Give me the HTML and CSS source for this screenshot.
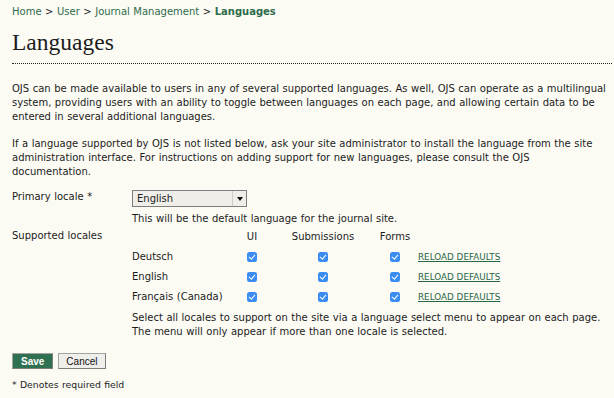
FILE: index.html
```html
<!DOCTYPE html>
<html>

<head>
    <title>Languages</title>
    <link rel="stylesheet" href="styles.css">
</head>

<body>
    <div class="page">
        <div class="breadcrumb">
            <a href="#">Home</a> &gt; <a href="#">User</a> &gt; <a href="#">Journal Management</a> &gt; <a href="#" class="current">Languages</a>
        </div>
        <h1 class="page-title">Languages</h1>

        <p class="intro">OJS can be made available to users in any of several supported languages. As well, OJS can operate as a multilingual system, providing users with an ability to toggle between languages on each page, and allowing certain data to be entered in several additional languages.</p>
        <p class="intro">If a language supported by OJS is not listed below, ask your site administrator to install the language from the site administration interface. For instructions on adding support for new languages, please consult the OJS documentation.</p>

        <form class="locale-form">
            <div class="form-row">
                <label class="form-label">Primary locale *</label>
                <div class="form-value">
                    <div class="select-box">
                        <span class="select-text">English</span>
                        <span class="select-arrow"></span>
                    </div>
                    <div class="instruct first">This will be the default language for the journal site.</div>
                </div>
            </div>
            <div class="form-row">
                <label class="form-label second">Supported locales</label>
                <div class="form-value">
                    <div class="locale-grid">
                        <span></span>
                        <span class="col-head">UI</span>
                        <span class="col-head">Submissions</span>
                        <span class="col-head">Forms</span>
                        <span></span>

                        <span class="locale-name">Deutsch</span>
                        <span class="cell"><span class="check"></span></span>
                        <span class="cell"><span class="check"></span></span>
                        <span class="cell"><span class="check"></span></span>
                        <a href="#" class="reload">RELOAD DEFAULTS</a>

                        <span class="locale-name">English</span>
                        <span class="cell"><span class="check"></span></span>
                        <span class="cell"><span class="check"></span></span>
                        <span class="cell"><span class="check"></span></span>
                        <a href="#" class="reload">RELOAD DEFAULTS</a>

                        <span class="locale-name">Français (Canada)</span>
                        <span class="cell"><span class="check"></span></span>
                        <span class="cell"><span class="check"></span></span>
                        <span class="cell"><span class="check"></span></span>
                        <a href="#" class="reload">RELOAD DEFAULTS</a>
                    </div>
                    <div class="instruct">Select all locales to support on the site via a language select menu to appear on each page. The menu will only appear if more than one locale is selected.</div>
                </div>
            </div>

            <div class="buttons">
                <button type="button" class="button default">Save</button>
                <button type="button" class="button">Cancel</button>
            </div>
        </form>

        <p class="footnote">* Denotes required field</p>
    </div>
</body>

</html>
```

FILE: styles.css
```css
body {
    margin: 0;
    background-color: #fbfbf4;
    color: #1c1c1c;
    font-family: "DejaVu Sans", Verdana, sans-serif;
    font-size: 10px;
    line-height: 14px;
    word-spacing: 0.35px;
}

a {
    color: #2e6b4b;
    text-decoration: none;
}

.page {
    padding: 5px 8px 0 12px;
}

.breadcrumb {
    height: 14px;
}

.breadcrumb .current {
    font-weight: bold;
}

.page-title {
    font-family: "Liberation Serif", Georgia, serif;
    font-weight: normal;
    font-size: 23.5px;
    line-height: 28px;
    margin: 9px 0 0 0;
    padding-bottom: 7px;
    border-bottom: 1px dotted #222;
    margin-right: -6px;
}

.intro {
    margin: 13px 0 0 0;
}

.intro:first-of-type {
    margin-top: 18px;
}

.locale-form {
    margin-top: 11px;
}

.form-row {
    display: grid;
    grid-template-columns: 120px 1fr;
    margin-bottom: 1px;
}

.form-label.second {
    padding-top: 2px;
}

.select-box {
    display: flex;
    box-sizing: border-box;
    width: 115px;
    height: 17px;
    border: 1px solid #7d7d7d;
    background-color: #efeee8;
}

.select-text {
    flex: 1;
    padding-left: 4px;
    line-height: 16px;
    border-right: 1px solid #cfcfca;
}

.select-arrow {
    width: 13px;
    position: relative;
}

.select-arrow::after {
    content: "";
    position: absolute;
    left: 4px;
    top: 6px;
    border-left: 3px solid transparent;
    border-right: 3px solid transparent;
    border-top: 4px solid #111;
}

.instruct {
    margin-top: 4px;
}

.instruct.first {
    margin-top: 5px;
}

.locale-grid {
    display: grid;
    grid-template-columns: 100px 40px 102px 42px auto;
    grid-auto-rows: 20px;
    align-items: center;
}

.col-head {
    text-align: center;
}

.cell {
    display: flex;
    justify-content: center;
}

.check {
    width: 10px;
    height: 10px;
    border-radius: 2.5px;
    background-color: #3a8cf2;
    position: relative;
}

.check::after {
    content: "";
    position: absolute;
    left: 3.2px;
    top: 1.2px;
    width: 2.5px;
    height: 5px;
    border: solid #fff;
    border-width: 0 1.5px 1.5px 0;
    transform: rotate(40deg);
}

.reload {
    font-size: 8.8px;
    color: #296646;
    text-decoration: underline;
    padding-left: 2px;
    word-spacing: 0;
}

.buttons {
    display: flex;
    gap: 5px;
    margin-top: 14px;
}

.button {
    font-family: "Liberation Sans", Arial, sans-serif;
    font-size: 10px;
    box-sizing: border-box;
    height: 16px;
    padding: 0 7px;
    border: 1px solid #a3a3a0;
    border-right-color: #7c7c7a;
    border-bottom-color: #7c7c7a;
    background-color: #eeeeea;
    color: #111;
    border-radius: 0;
}

.button.default {
    background-color: #2e7050;
    color: #fff;
    font-weight: bold;
    padding: 0 8px;
}

.footnote {
    font-size: 9.3px;
    margin: 9px 0 0 0;
}
```
